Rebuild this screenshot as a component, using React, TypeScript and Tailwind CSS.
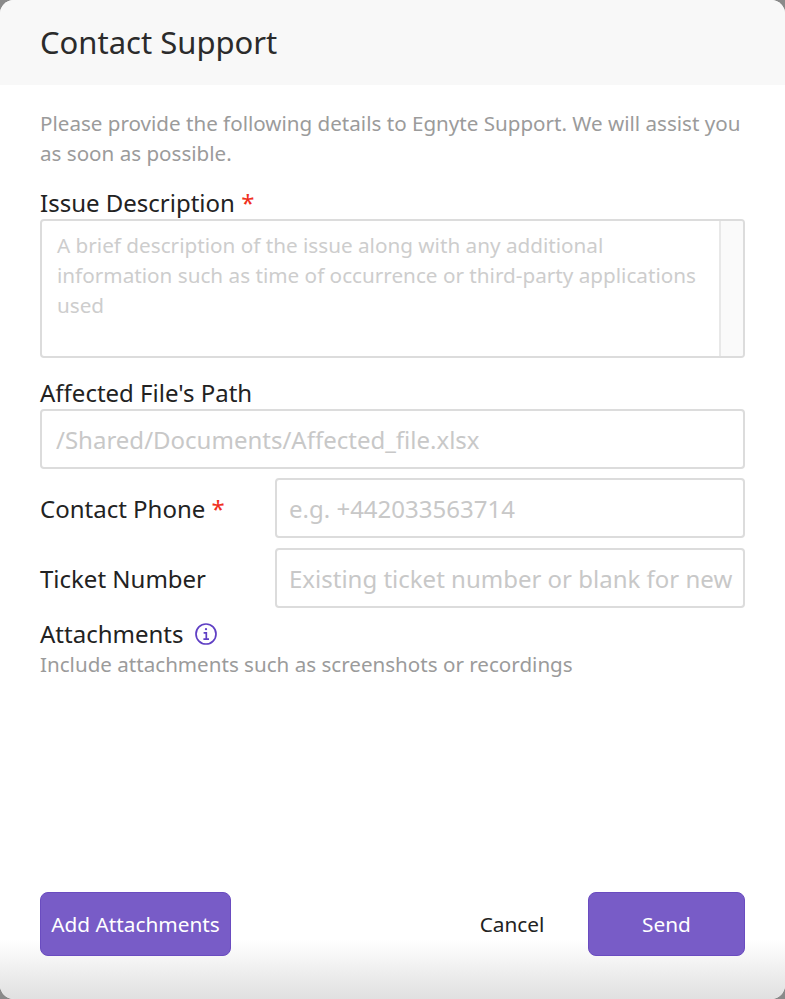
import React from 'react';

const font = "font-['Noto_Sans','Open_Sans',sans-serif]";

const inputClass =
  'h-[60px] w-full rounded border-2 border-[#dcdcdc] bg-white pl-[12px] pr-[8px] text-[24px] tracking-normal text-[#333] outline-none placeholder:text-[#c8c8c8]';

const Star = () => <span className="text-[#f0301e]">*</span>;

export default function App() {
  return (
    <div className={`${font} relative h-[999px] w-[785px] overflow-hidden bg-[#8a8a8a]`}>
      <div className="flex h-full w-full flex-col overflow-hidden rounded-[14px] bg-white">
        {/* Header */}
        <div className="flex h-[85px] shrink-0 items-center bg-[#f8f8f8] pl-[40px]">
          <h1 className="text-[31px] font-normal leading-none text-[#2b2b2b]">Contact Support</h1>
        </div>

        {/* Body */}
        <div className="flex flex-1 flex-col px-[40px] pt-[23px]">
          <p className="text-[20.6px] leading-[30px] text-[#9b9b9b]">
            Please provide the following details to Egnyte Support. We will assist you as soon as possible.
          </p>

          <label className="mt-[17px] text-[24px] leading-[36px] text-[#222]">
            Issue Description <Star />
          </label>
          <div className="mt-[-2px] flex h-[139px] w-full overflow-hidden rounded border-2 border-[#dcdcdc] bg-white">
            <div className="flex-1 pl-[15px] pr-[20px] pt-[9px] text-[20.7px] leading-[30px] text-[#cdcdcd]">
              A brief description of the issue along with any additional information such as time of occurrence or third-party applications used
            </div>
            <div className="w-[24px] shrink-0 border-l-2 border-[#e8e8e8] bg-[#fafafa]" />
          </div>

          <label className="mt-[17px] text-[24px] leading-[36px] text-[#222]">Affected File's Path</label>
          <input className={`${inputClass} mt-[-2px] pl-[14px]`} placeholder="/Shared/Documents/Affected_file.xlsx" readOnly />

          <div className="mt-[9px] flex items-center">
            <label className="w-[235px] shrink-0 pt-[2px] text-[24px] text-[#222]">
              Contact Phone <Star />
            </label>
            <input className={inputClass} placeholder="e.g. +442033563714" readOnly />
          </div>

          <div className="mt-[10px] flex items-center">
            <label className="w-[235px] shrink-0 pt-[2px] text-[24px] text-[#222]">Ticket Number</label>
            <input className={inputClass} placeholder="Existing ticket number or blank for new" readOnly />
          </div>

          <div className="mt-[8px] flex items-center gap-[11px] text-[24px] leading-[36px] text-[#222]">
            <span>Attachments</span>
            <svg width="24" height="24" viewBox="0 0 24 24" fill="none" stroke="#5f3fc4" strokeWidth="1.7">
              <circle cx="12" cy="12" r="10" />
              <circle cx="12" cy="7.2" r="1.1" fill="#5f3fc4" stroke="none" />
              <path d="M9.6 10.9H12.3V17M9.4 17.1H15" />
            </svg>
          </div>
          <p className="text-[20.6px] leading-[24px] text-[#9b9b9b]">Include attachments such as screenshots or recordings</p>
        </div>

        {/* Footer */}
        <div className="flex h-[107px] shrink-0 items-start bg-gradient-to-b from-white from-45% to-[#e0e0e0] px-[40px]">
          <button className="h-[64px] w-[191px] rounded-lg border border-[#6a4cc0] bg-[#785cc7] pt-[1px] text-[20.8px] text-white">
            Add Attachments
          </button>
          <button className="ml-auto h-[64px] w-[128px] pt-[1px] text-[20.8px] text-[#222]">Cancel</button>
          <button className="ml-[12px] h-[64px] w-[157px] rounded-lg border border-[#6a4cc0] bg-[#785cc7] pt-[1px] text-[20.8px] text-white">
            Send
          </button>
        </div>
      </div>
    </div>
  );
}
